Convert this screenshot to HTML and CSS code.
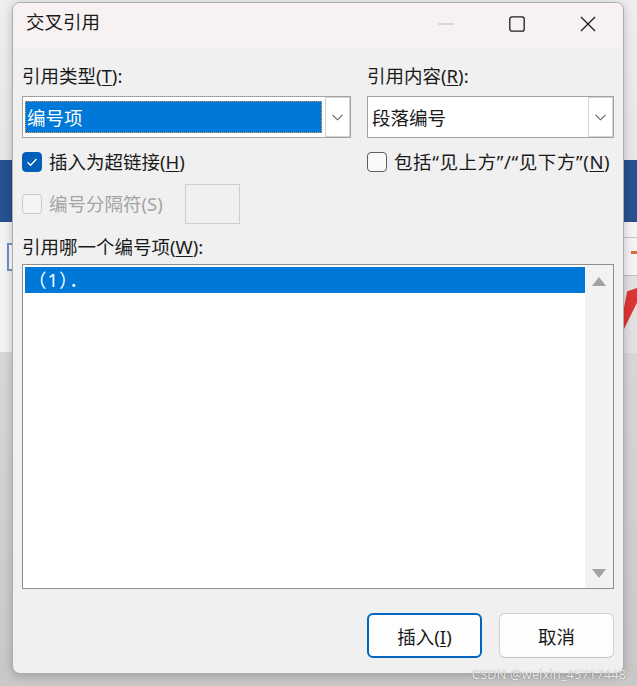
FILE: index.html
```html
<!DOCTYPE html>
<html lang="zh-CN">
  <head>
    <meta charset="UTF-8" />
    <meta name="viewport" content="width=device-width, initial-scale=1.0" />
    <title>交叉引用</title>
    <link rel="stylesheet" href="styles.css">
  </head>
  <body>
    <div class="desk">
      <!-- bits of the Word window behind the dialog -->
      <div class="bg-frame"></div>
      <div class="bg-ruler"></div>
      <div class="bg-dash"></div>
      <div class="bg-arrow"></div>

      <div class="dialog">
        <div class="titlebar">
          <span class="title">交叉引用</span>
          <div class="caption">
            <span class="cap">
              <svg width="16" height="16" viewBox="0 0 16 16"><line x1="0.5" y1="8" x2="15.5" y2="8" stroke="#b9b9b9" stroke-width="1.2"/></svg>
            </span>
            <span class="cap">
              <svg width="16" height="16" viewBox="0 0 16 16"><rect x="0.8" y="0.8" width="14.4" height="14.4" rx="2.2" fill="none" stroke="#1b1b1b" stroke-width="1.3"/></svg>
            </span>
            <span class="cap">
              <svg width="16" height="16" viewBox="0 0 16 16"><path d="M1 1 L15 15 M15 1 L1 15" stroke="#1b1b1b" stroke-width="1.3" fill="none"/></svg>
            </span>
          </div>
        </div>

        <div class="body">
          <div class="grid">
            <div class="lbl">引用类型(<u>T</u>):</div>
            <div class="lbl">引用内容(<u>R</u>):</div>

            <div class="combo">
              <div class="combo-value selected">编号项</div>
              <div class="combo-btn">
                <svg width="11" height="7" viewBox="0 0 11 7"><polyline points="0.5,0.8 5.5,5.8 10.5,0.8" fill="none" stroke="#5f5f5f" stroke-width="1.1"/></svg>
              </div>
            </div>
            <div class="combo">
              <div class="combo-value">段落编号</div>
              <div class="combo-btn">
                <svg width="11" height="7" viewBox="0 0 11 7"><polyline points="0.5,0.8 5.5,5.8 10.5,0.8" fill="none" stroke="#5f5f5f" stroke-width="1.1"/></svg>
              </div>
            </div>

            <div class="check-row">
              <span class="box box-on">
                <svg width="18" height="18" viewBox="0 0 18 18"><polyline points="4.5,9.3 7.6,12.3 13.5,6" fill="none" stroke="#fff" stroke-width="1.3"/></svg>
              </span>
              <span>插入为超链接(<u>H</u>)</span>
            </div>
            <div class="check-row">
              <span class="box"></span>
              <span class="quote-text">包括“见上方”/“见下方”(<u>N</u>)</span>
            </div>

            <div class="sep-row">
              <div class="check-row disabled">
                <span class="box"></span>
                <span>编号分隔符(S)</span>
              </div>
              <span class="sep-input"></span>
            </div>
          </div>

          <div class="lbl lbl-list">引用哪一个编号项(<u>W</u>):</div>
          <div class="listbox">
            <div class="items">
              <div class="item sel">（1）．</div>
            </div>
            <div class="vscroll">
              <svg width="14" height="9" viewBox="0 0 14 9"><polygon points="7,0 14,9 0,9" fill="#a3a3a3"/></svg>
              <svg width="14" height="9" viewBox="0 0 14 9"><polygon points="0,0 14,0 7,9" fill="#a3a3a3"/></svg>
            </div>
          </div>

          <div class="actions">
            <button class="btn btn-primary">插入(<u>I</u>)</button>
            <button class="btn">取消</button>
          </div>
        </div>
      </div>

      <div class="watermark">CSDN @weixin_45717448</div>
    </div>
  </body>
</html>
```

FILE: styles.css
```css
body {
  margin: 0;
}

.desk {
  position: relative;
  width: 637px;
  height: 686px;
  overflow: hidden;
  font-family: "Noto Sans", "Noto Sans CJK SC", sans-serif;
  color: #1a1a1a;
  background: linear-gradient(
    to bottom,
    #eeeeee 0,
    #e6e6e6 160px,
    #28518f 160px,
    #28518f 222px,
    #f3f3f3 222px,
    #f3f3f3 352px,
    #d7d7d7 352px,
    #c8c8c8 100%
  );
}

/* background app pieces */
.bg-frame {
  position: absolute;
  left: 7px;
  top: 243px;
  width: 10px;
  height: 24px;
  border: 2px solid #6d90c8;
  background: #fff;
}

.bg-ruler {
  position: absolute;
  left: 620px;
  right: 0;
  top: 237px;
  height: 115px;
  border-top: 1px solid #c4c4c4;
  background: linear-gradient(
    to bottom,
    #f3f3f3 0,
    #f3f3f3 37px,
    #bdbdbd 37px,
    #bdbdbd 38px,
    #e1e1e1 38px
  );
}

.bg-dash {
  position: absolute;
  left: 631px;
  top: 251px;
  width: 8px;
  height: 3px;
  background: #d96b3b;
}

.bg-arrow {
  position: absolute;
  left: 622px;
  top: 288px;
  width: 15px;
  height: 42px;
  background: #dc3535;
  clip-path: polygon(35% 8%, 100% 0, 100% 35%, 10% 100%, 0 70%);
}

/* dialog window */
.dialog {
  position: absolute;
  left: 12px;
  top: 2px;
  width: 612px;
  height: 672px;
  box-sizing: border-box;
  border: 1px solid #adadad;
  border-radius: 8px;
  background: #f0f0f0;
  box-shadow: 0 2px 10px rgba(0, 0, 0, 0.22);
  overflow: hidden;
}

.titlebar {
  height: 45px;
  display: flex;
  align-items: flex-start;
  background: #f8f1f2;
}

.title {
  padding: 7px 0 0 13px;
  font-size: 18.5px;
  line-height: 24px;
}

.caption {
  margin-left: auto;
  display: flex;
}

.cap {
  width: 71px;
  height: 41px;
  display: flex;
  align-items: center;
  justify-content: center;
}

.body {
  padding: 16px 9px 15px;
  font-size: 18.5px;
}

.grid {
  display: grid;
  grid-template-columns: 329px 1fr;
  column-gap: 16px;
}

u {
  text-underline-offset: 2px;
}

.lbl {
  height: 24px;
  line-height: 24px;
}

.combo {
  margin-top: 8px;
  height: 42px;
  box-sizing: border-box;
  border: 1px solid #a3a3a3;
  background: #fff;
  display: flex;
}

.combo-value {
  flex: 1;
  margin: 4px 3px 4px 2px;
  padding-left: 2px;
  display: flex;
  align-items: center;
}

.combo-value.selected {
  background: #0078d7;
  color: #fff;
  outline: 1px dotted #e49b4d;
  outline-offset: -1px;
}

.combo-btn {
  width: 23px;
  border: 1px solid #d3d3d3;
  display: flex;
  align-items: center;
  justify-content: center;
}

.check-row {
  margin-top: 12px;
  height: 24px;
  line-height: 24px;
  display: flex;
  align-items: center;
  gap: 7px;
  white-space: nowrap;
}

.quote-text {
  letter-spacing: 0.6px;
}

.box {
  width: 20px;
  height: 20px;
  box-sizing: border-box;
  border: 1px solid #5d5d5d;
  border-radius: 4px;
  background: #f9f9f9;
  display: flex;
  align-items: center;
  justify-content: center;
}

.box-on {
  background: #005fb8;
  border-color: #005fb8;
}

.sep-row {
  margin-top: 10px;
  display: flex;
  align-items: center;
}

.sep-row .check-row {
  margin-top: 0;
}

.disabled {
  color: #a4a4a4;
}

.disabled .box {
  border-color: #c9c9c9;
  background: #f4f4f4;
}

.sep-input {
  margin-left: 22px;
  width: 55px;
  height: 40px;
  box-sizing: border-box;
  border: 1px solid #cecece;
  background: #f0f0f0;
}

.lbl-list {
  margin-top: 11px;
}

.listbox {
  margin-top: 5px;
  height: 325px;
  box-sizing: border-box;
  border: 1px solid #8e8e8e;
  background: #fff;
  display: flex;
}

.items {
  flex: 1;
  padding: 2px 0 0 2px;
}

.item {
  height: 26px;
  line-height: 26px;
  padding-left: 3px;
  letter-spacing: 1px;
}

.item.sel {
  background: #0078d7;
  color: #fff;
}

.vscroll {
  width: 28px;
  box-sizing: border-box;
  padding: 12px 0 10px;
  background: #f2f2f2;
  display: flex;
  flex-direction: column;
  justify-content: space-between;
  align-items: center;
}

.actions {
  margin-top: 24px;
  display: flex;
  justify-content: flex-end;
  gap: 17px;
}

.btn {
  width: 115px;
  height: 45px;
  border: 1px solid #d0d0d0;
  border-bottom-color: #c2c2c2;
  border-radius: 6px;
  background: #fdfdfd;
  font-family: "Noto Sans", "Noto Sans CJK SC", sans-serif;
  font-size: 18.5px;
  color: #1a1a1a;
  padding: 0;
}

.btn-primary {
  border: 2px solid #0067c0;
}

.watermark {
  position: absolute;
  right: 11px;
  bottom: 4px;
  font-size: 13px;
  line-height: 16px;
  color: rgba(255, 255, 255, 0.9);
  text-shadow: 0 0 1px rgba(0, 0, 0, 0.55);
}
```
